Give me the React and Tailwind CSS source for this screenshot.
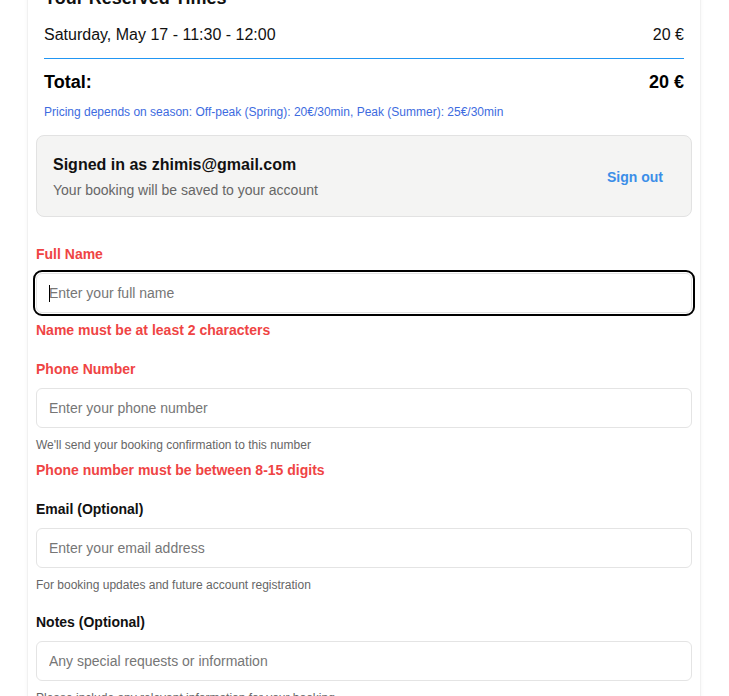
import { useState } from "react";

const font = { fontFamily: '"Segoe UI", "Liberation Sans", Arial, sans-serif' };

function Field({ label, placeholder, error, helper, invalid, focused }) {
  return (
    <div>
      <label className={`block text-sm font-semibold leading-5 ${invalid ? "text-[#ef4444]" : "text-[#111]"}`}>
        {label}
      </label>
      <div className="relative mt-[9px]">
        <input
          type="text"
          placeholder={placeholder}
          className={`block w-full h-10 rounded-md border border-[#e4e4e4] bg-white px-3 text-sm text-[#111] placeholder:text-[#767676] ${
            focused ? "outline-2 outline-black outline-offset-1" : "outline-none"
          }`}
        />
        {focused && <span className="absolute left-[13px] top-[12px] h-[17px] w-px bg-black" />}
      </div>
      {helper && <p className="mt-[9px] text-xs leading-4 text-[#666]">{helper}</p>}
      {error && <p className="mt-[7px] text-sm font-semibold leading-5 text-[#ef4444]">{error}</p>}
    </div>
  );
}

export default function App() {
  const [signedIn] = useState(true);

  return (
    <div className="min-h-screen bg-white overflow-hidden" style={font}>
      <div className="ml-[27px] w-[674px] -mt-[16px] bg-white border-x border-[#f1f1f1] shadow-[0_0_4px_rgba(0,0,0,0.04)] px-[8px] pb-10">
        <div className="px-2">
          <h2 className="text-lg font-semibold leading-7 text-[#111]">Your Reserved Times</h2>
          <div className="mt-[11px] flex items-center justify-between text-base leading-6 text-[#111]">
            <span>Saturday, May 17 - 11:30 - 12:00</span>
            <span>20 €</span>
          </div>
          <div className="mt-[11px] border-t border-[#2196f3]" />
          <div className="mt-[9px] flex items-center justify-between text-lg font-bold leading-7 text-black">
            <span>Total:</span>
            <span>20 €</span>
          </div>
          <p className="mt-[8px] text-xs leading-4 text-[#3d6be0]">
            Pricing depends on season: Off-peak (Spring): 20€/30min, Peak (Summer): 25€/30min
          </p>
        </div>

        {signedIn && (
          <div className="mt-[15px] flex items-center justify-between rounded-lg border border-[#e2e2e2] bg-[#f4f4f3] px-4 pt-[17px] pb-4">
            <div>
              <p className="text-base font-semibold leading-6 text-[#111]">Signed in as zhimis@gmail.com</p>
              <p className="mt-[3px] text-sm leading-5 text-[#666]">Your booking will be saved to your account</p>
            </div>
            <button className="mr-[12px] text-sm font-semibold text-[#3b8ee8]">Sign out</button>
          </div>
        )}

        <div className="mt-[27px] flex flex-col gap-[19px]">
          <Field label="Full Name" placeholder="Enter your full name" invalid focused error="Name must be at least 2 characters" />
          <Field
            label="Phone Number"
            placeholder="Enter your phone number"
            invalid
            helper="We'll send your booking confirmation to this number"
            error="Phone number must be between 8-15 digits"
          />
          <Field label="Email (Optional)" placeholder="Enter your email address" helper="For booking updates and future account registration" />
          <Field label="Notes (Optional)" placeholder="Any special requests or information" helper="Please include any relevant information for your booking" />
        </div>
      </div>
    </div>
  );
}
